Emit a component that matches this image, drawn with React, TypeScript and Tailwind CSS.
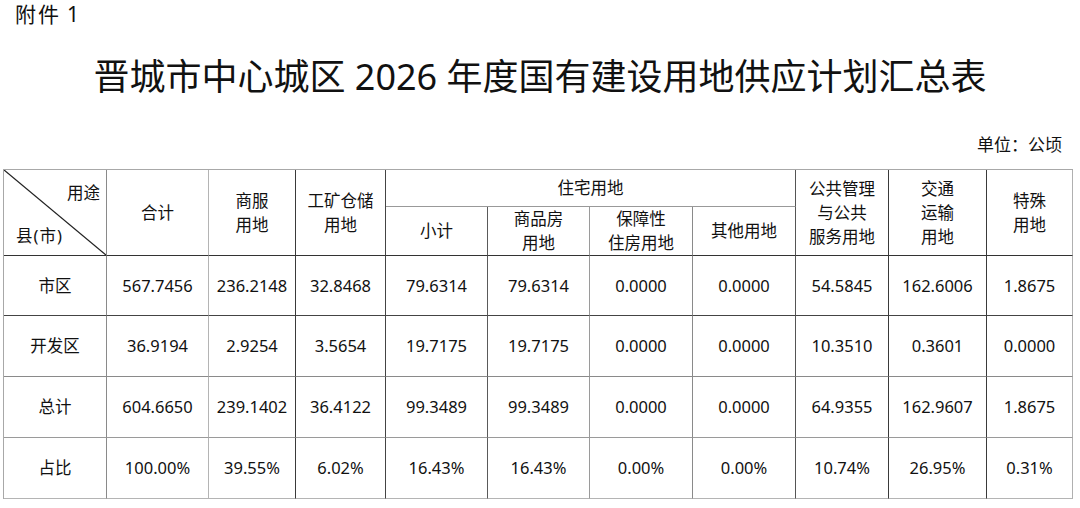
const font = { fontFamily: '"Noto Sans", "Noto Sans CJK SC", sans-serif' }

// column widths measured off the scan, left to right
const colWidths = ['w-[103px]', 'w-[102px]', 'w-[87px]', 'w-[90px]', 'w-[102px]', 'w-[102px]', 'w-[103px]', 'w-[103px]', 'w-[93px]', 'w-[98px]', 'w-[86px]']

// right border colour per column (the scan has a mix of dark and light rules)
const rightRule = [
  'border-r-[#8a8a8a]',
  'border-r-[#b4b4b4]',
  'border-r-[#3a3a3a]',
  'border-r-[#444]',
  'border-r-[#5a5a5a]',
  'border-r-[#9a9a9a]',
  'border-r-[#8a8a8a]',
  'border-r-[#555]',
  'border-r-[#3a3a3a]',
  'border-r-[#3a3a3a]',
  'border-r-[#b0b0b0]',
]

const rows = [
  { name: '市区', h: 'h-[60px]', rule: 'border-b-[#444]', vals: ['567.7456', '236.2148', '32.8468', '79.6314', '79.6314', '0.0000', '0.0000', '54.5845', '162.6006', '1.8675'] },
  { name: '开发区', h: 'h-[61px]', rule: 'border-b-[#8a8a8a]', vals: ['36.9194', '2.9254', '3.5654', '19.7175', '19.7175', '0.0000', '0.0000', '10.3510', '0.3601', '0.0000'] },
  { name: '总计', h: 'h-[61px]', rule: 'border-b-[#9a9a9a]', vals: ['604.6650', '239.1402', '36.4122', '99.3489', '99.3489', '0.0000', '0.0000', '64.9355', '162.9607', '1.8675'] },
  { name: '占比', h: 'h-[61px]', rule: 'border-b-[#b4b4b4]', vals: ['100.00%', '39.55%', '6.02%', '16.43%', '16.43%', '0.00%', '0.00%', '10.74%', '26.95%', '0.31%'] },
]

const cell = 'border-r border-b text-center align-middle p-0'

export default function App() {
  return (
    <div className="w-[1080px] h-[508px] bg-white text-[#111] overflow-hidden" style={font}>
      <p className="pl-[15px] text-[21px] leading-[28px] tracking-[2px]">附件<span className="ml-[6px]">1</span></p>
      <h1 className="mt-[25px] text-center text-[36px] leading-[48px]">晋城市中心城区 2026 年度国有建设用地供应计划汇总表</h1>
      <p className="mt-[32px] pr-[18px] text-right text-[17px] leading-[24px]">单位：公顷</p>

      <table className="ml-[3px] mt-[12px] w-[1070px] table-fixed border-separate border-spacing-0 border-t border-l border-t-[#a8a8a8] border-l-[#a8a8a8] text-[16.5px] leading-[24px]">
        <colgroup>
          {colWidths.map((w, i) => <col key={i} className={w} />)}
        </colgroup>
        <thead>
          <tr className="h-[37px]">
            <th rowSpan={2} className={`${cell} ${rightRule[0]} border-b-[#333] relative font-normal`}>
              <svg className="absolute inset-0 w-full h-full" viewBox="0 0 102 85" preserveAspectRatio="none">
                <line x1="0" y1="0" x2="102" y2="85" stroke="#222" strokeWidth="1.3" />
              </svg>
              <span className="absolute top-[15px] right-[6px] leading-[16px]">用途</span>
              <span className="absolute bottom-[11px] left-[12px] leading-[16px] tracking-[1px]">县(市)</span>
            </th>
            <th rowSpan={2} className={`${cell} ${rightRule[1]} border-b-[#333] font-normal`}>合计</th>
            <th rowSpan={2} className={`${cell} ${rightRule[2]} border-b-[#333] font-normal`}>商服<br />用地</th>
            <th rowSpan={2} className={`${cell} ${rightRule[3]} border-b-[#333] font-normal`}>工矿仓储<br />用地</th>
            <th colSpan={4} className={`${cell} ${rightRule[7]} border-b-[#999] font-normal`}>住宅用地</th>
            <th rowSpan={2} className={`${cell} ${rightRule[8]} border-b-[#333] font-normal`}>公共管理<br />与公共<br />服务用地</th>
            <th rowSpan={2} className={`${cell} ${rightRule[9]} border-b-[#333] font-normal`}>交通<br />运输<br />用地</th>
            <th rowSpan={2} className={`${cell} ${rightRule[10]} border-b-[#333] font-normal`}>特殊<br />用地</th>
          </tr>
          <tr className="h-[49px]">
            <th className={`${cell} ${rightRule[4]} border-b-[#333] font-normal`}>小计</th>
            <th className={`${cell} ${rightRule[5]} border-b-[#333] font-normal`}>商品房<br />用地</th>
            <th className={`${cell} ${rightRule[6]} border-b-[#333] font-normal`}>保障性<br />住房用地</th>
            <th className={`${cell} ${rightRule[7]} border-b-[#333] font-normal`}>其他用地</th>
          </tr>
        </thead>
        <tbody>
          {rows.map(r => (
            <tr key={r.name} className={r.h}>
              <td className={`${cell} ${rightRule[0]} ${r.rule}`}>{r.name}</td>
              {r.vals.map((v, i) => (
                <td key={i} className={`${cell} ${rightRule[i + 1]} ${r.rule}`}>{v}</td>
              ))}
            </tr>
          ))}
        </tbody>
      </table>
    </div>
  )
}
